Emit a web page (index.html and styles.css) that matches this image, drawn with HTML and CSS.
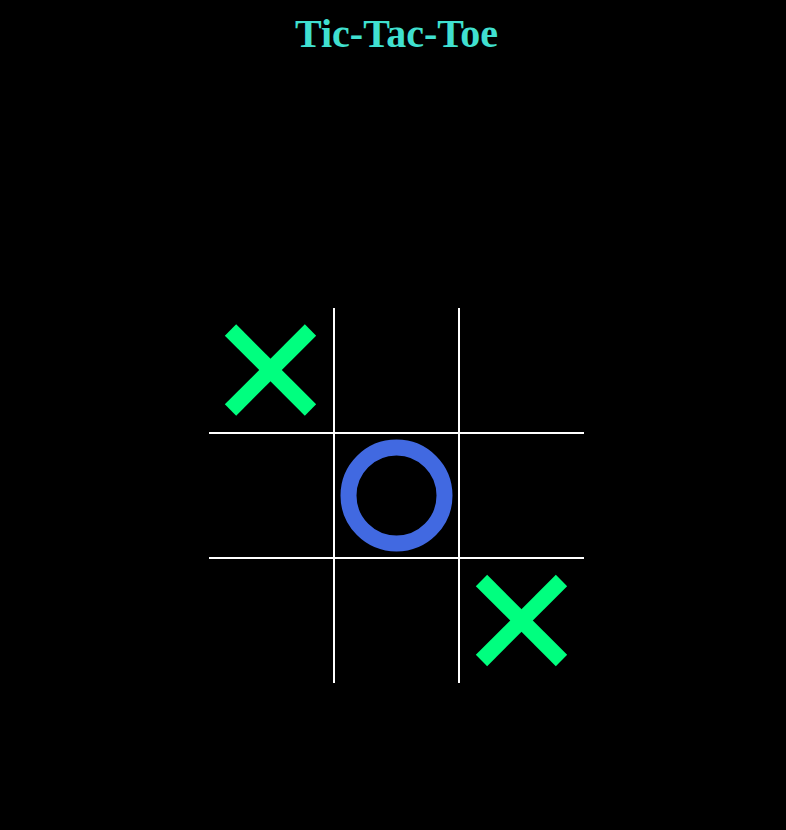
FILE: index.html
```html
<!DOCTYPE html>
<html lang="en">
<head>
<meta charset="utf-8">
<title>Tic-Tac-Toe</title>
<link rel="stylesheet" href="styles.css">
</head>
<body>
<main class="page">
  <h1 class="title">Tic-Tac-Toe</h1>
  <div class="board">
    <div class="cell c-r c-b">
      <svg class="mark" viewBox="0 0 124 124" width="124" height="124"><g class="x-mark"><line x1="21.5" y1="22" x2="101.5" y2="102"/><line x1="101.5" y1="22" x2="21.5" y2="102"/></g></svg>
    </div>
    <div class="cell c-l c-r c-b"></div>
    <div class="cell c-l c-b"></div>
    <div class="cell c-r c-t c-b"></div>
    <div class="cell c-l c-r c-t c-b">
      <svg class="mark" viewBox="0 0 123 123" width="123" height="123"><circle class="o-mark" cx="61.5" cy="61.5" r="48"/></svg>
    </div>
    <div class="cell c-l c-t c-b"></div>
    <div class="cell c-r c-t"></div>
    <div class="cell c-l c-r c-t"></div>
    <div class="cell c-l c-t">
      <svg class="mark" viewBox="0 0 124 124" width="124" height="124"><g class="x-mark"><line x1="21.5" y1="21.5" x2="101.5" y2="101.5"/><line x1="101.5" y1="21.5" x2="21.5" y2="101.5"/></g></svg>
    </div>
  </div>
</main>
</body>
</html>
```

FILE: styles.css
```css
html, body {
  margin: 0;
  padding: 0;
  background: #000;
}

.page {
  display: flex;
  flex-direction: column;
  align-items: center;
  padding-left: 7px;
  min-height: 830px;
  box-sizing: border-box;
}

.title {
  margin: 12px 0 0;
  font-family: "Liberation Serif", "Times New Roman", serif;
  font-weight: bold;
  font-size: 40px;
  line-height: 44px;
  color: #40e0d0;
}

.board {
  margin-top: 252px;
  display: grid;
  grid-template-columns: repeat(3, 125px);
  grid-template-rows: repeat(3, 125px);
}

.cell {
  box-sizing: border-box;
  display: flex;
  align-items: center;
  justify-content: center;
}

.c-l { border-left: 1px solid #fff; }
.c-r { border-right: 1px solid #fff; }
.c-t { border-top: 1px solid #fff; }
.c-b { border-bottom: 1px solid #fff; }

.mark {
  display: block;
}

.x-mark line {
  stroke: #00ff7f;
  stroke-width: 16;
  stroke-linecap: butt;
}

.o-mark {
  fill: none;
  stroke: #4169e1;
  stroke-width: 16;
}
```
